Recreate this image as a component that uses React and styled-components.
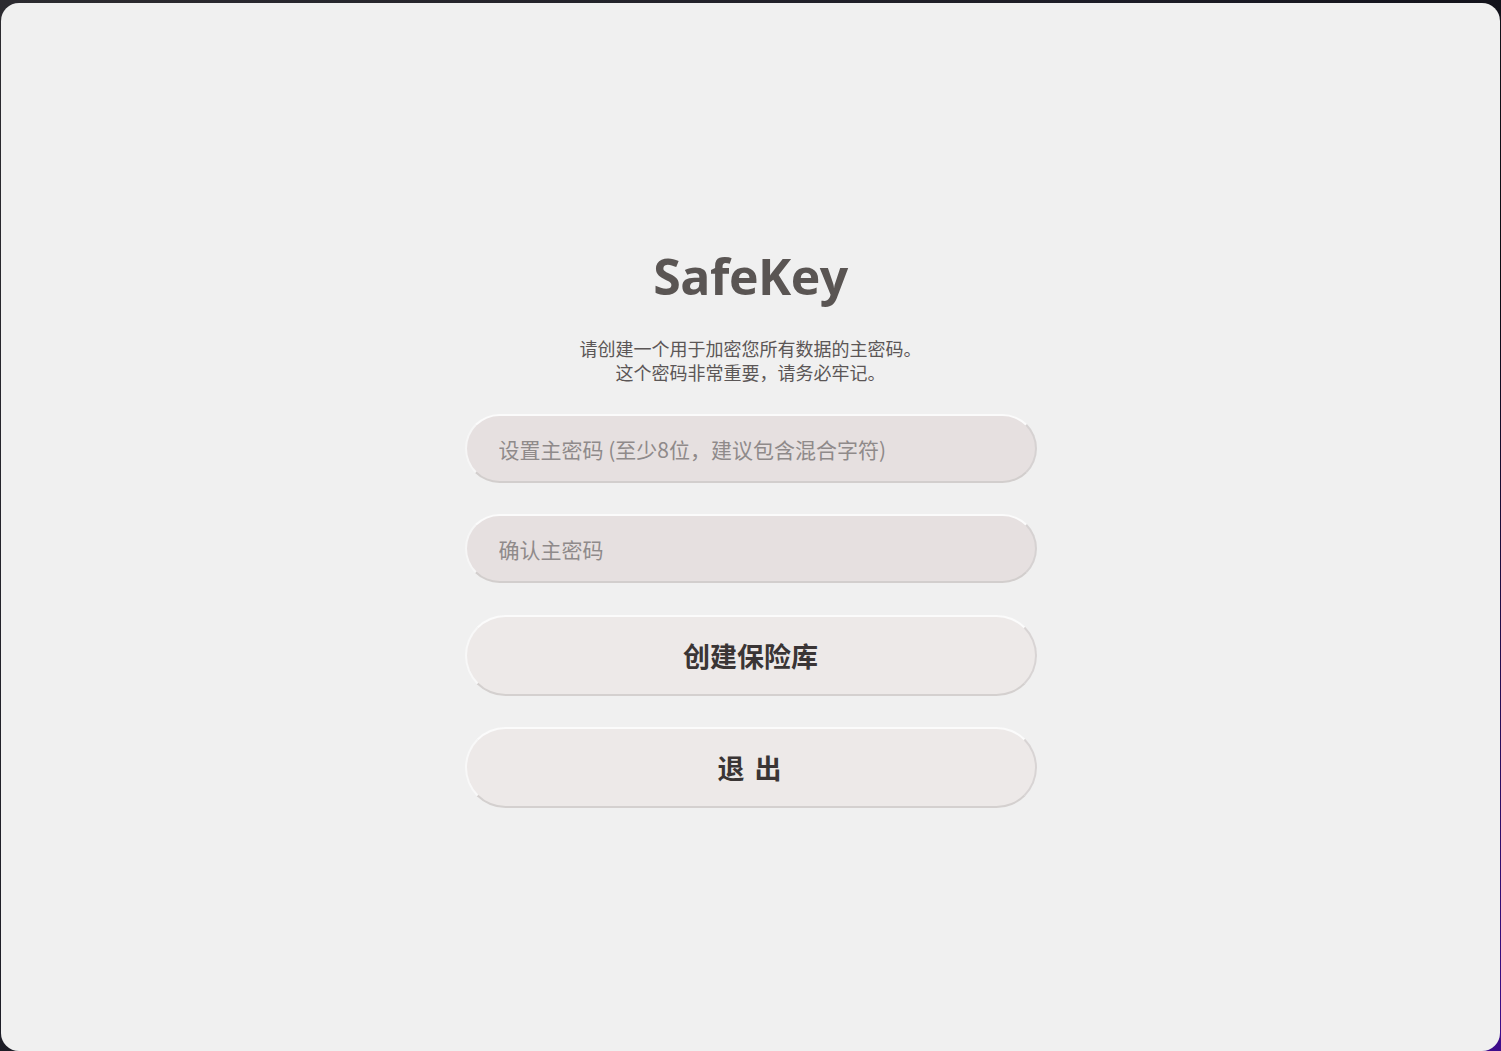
import React from "react";
import styled, { createGlobalStyle } from "styled-components";

const GlobalStyle = createGlobalStyle`
	html, body {
		margin: 0;
		padding: 0;
		background: linear-gradient(135deg, #2c2b30 0%, #1c1c26 45%, #0b0b12 70%, #3d0c8c 100%);
		font-family: "Noto Sans", "Noto Sans CJK SC", sans-serif;
	}
	#root {
		padding: 3px 1px 0 1px;
	}
`;

const Window = styled.div`
	height: 1048px;
	background-color: #f0f0f0;
	border-radius: 18px;
	display: flex;
	flex-direction: column;
	align-items: center;
	justify-content: center;
	box-sizing: border-box;
`;

const Title = styled.h1`
	margin: 0;
	font-family: "Open Sans", "Noto Sans", sans-serif;
	font-size: 50px;
	font-weight: 700;
	line-height: 60px;
	color: #5a5553;
	letter-spacing: -0.5px;
`;

const Subtitle = styled.p`
	margin: 30px 0 30px;
	font-family: "Noto Sans CJK SC", sans-serif;
	font-size: 18px;
	line-height: 24px;
	color: #5b5656;
	text-align: center;
`;

const Form = styled.div`
	width: 572px;
	display: flex;
	flex-direction: column;
	gap: 31px;
`;

const Field = styled.input`
	box-sizing: border-box;
	width: 100%;
	height: 69px;
	padding: 0 32px;
	border-radius: 35px;
	border: 2px solid;
	border-color: #fbfbfb #d6d2d2 #d2cecd #f6f6f6;
	background-color: #e6e0e0;
	font-family: "Noto Sans CJK SC", sans-serif;
	font-size: 21px;
	color: #3a3535;
	caret-color: #222;
	outline: none;

	&::placeholder {
		color: #8f8a8a;
	}
`;

const Button = styled.button`
	box-sizing: border-box;
	width: 100%;
	height: 81px;
	border-radius: 41px;
	border: 2px solid;
	border-color: #fbfbfb #d8d4d4 #d4d0cf #f8f8f8;
	background-color: #ede9e8;
	font-family: "Noto Sans CJK SC", sans-serif;
	font-size: 27px;
	font-weight: 700;
	color: #3a3535;
	cursor: pointer;
	letter-spacing: ${(p) => (p.$wide ? "2px" : "0")};
`;

const ButtonGroup = styled.div`
	display: flex;
	flex-direction: column;
	gap: 31px;
	margin-top: 1px;
`;

export default function App() {
	return (
		<>
			<GlobalStyle />
			<Window>
				<Title>SafeKey</Title>
				<Subtitle>
					请创建一个用于加密您所有数据的主密码。
					<br />
					这个密码非常重要，请务必牢记。
				</Subtitle>
				<Form>
					<Field
						type="password"
						autoFocus
						placeholder="设置主密码 (至少8位，建议包含混合字符)"
					/>
					<Field type="password" placeholder="确认主密码" />
					<ButtonGroup>
						<Button>创建保险库</Button>
						<Button $wide>退 出</Button>
					</ButtonGroup>
				</Form>
			</Window>
		</>
	);
}
